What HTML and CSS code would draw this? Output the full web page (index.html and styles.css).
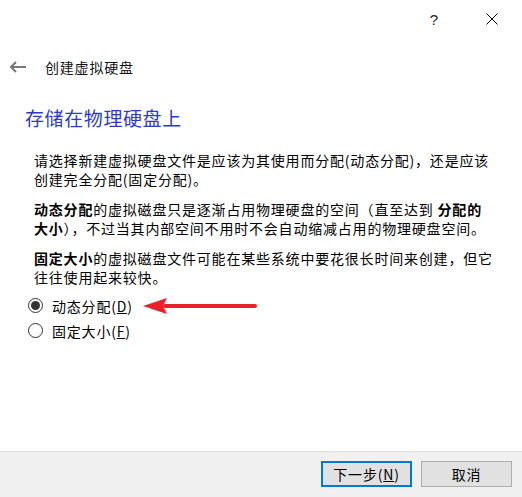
FILE: index.html
```html
<!DOCTYPE html>
<html>
<head>
<meta charset="utf-8">
<title>创建虚拟硬盘</title>
<link rel="stylesheet" href="styles.css">
</head>
<body>
<div class="titlebar">
	<span class="tb_btn tb_help">?</span>
	<span class="tb_btn tb_close">
		<svg width="12" height="12" viewBox="0 0 12 12"><path d="M0.5 0.5L11.5 11.5M11.5 0.5L0.5 11.5" stroke="#000" stroke-width="1" fill="none"/></svg>
	</span>
</div>

<div class="nav">
	<svg class="nav_back" width="16" height="12" viewBox="0 0 16 12"><path d="M1 6H16M6 1L1 6L6 11" stroke="#777" stroke-width="2" fill="none"/></svg>
	<span class="nav_title">创建虚拟硬盘</span>
</div>

<div class="main">
	<h1 class="page_title">存储在物理硬盘上</h1>
	<div class="content">
		<p>请选择新建虚拟硬盘文件是应该为其使用而分配(动态分配)，还是应该<br>创建完全分配(固定分配)。</p>
		<p><b>动态分配</b>的虚拟磁盘只是逐渐占用物理硬盘的空间（直至达到 <b>分配的<br>大小</b>），不过当其内部空间不用时不会自动缩减占用的物理硬盘空间。</p>
		<p class="last"><b>固定大小</b>的虚拟磁盘文件可能在某些系统中要花很长时间来创建，但它<br>往往使用起来较快。</p>
		<div class="radios">
			<label class="radio_row">
				<input type="radio" name="alloc" checked>
				<span>动态分配(<u>D</u>)</span>
				<svg class="hint_arrow" width="114" height="18" viewBox="0 0 114 18"><path d="M22 9H112" stroke="#e8212b" stroke-width="4" stroke-linecap="round"/><path d="M0 9L24 1L20 9L24 17Z" fill="#e8212b"/></svg>
			</label>
			<label class="radio_row">
				<input type="radio" name="alloc">
				<span>固定大小(<u>F</u>)</span>
			</label>
		</div>
	</div>
</div>

<div class="footer">
	<button class="btn btn_default">下一步(<u>N</u>)</button>
	<button class="btn">取消</button>
</div>
</body>
</html>
```

FILE: styles.css
```css
html,body{margin: 0;padding: 0;}
body{width: 522px;height: 497px;display: flex;flex-direction: column;background: #fff;color: #000;font-family: "Noto Sans CJK SC", "Liberation Sans", sans-serif;font-size: 14px;overflow: hidden;}

.titlebar{height: 38px;display: flex;justify-content: flex-end;padding-right: 7px;}
.tb_btn{width: 46px;display: flex;align-items: center;justify-content: center;}
.tb_help{margin-right: 12px;font-family: "Liberation Sans", sans-serif;font-size: 15px;color: #222;}

.nav{height: 30px;margin-top: 14px;display: flex;align-items: center;}
.nav_back{margin-left: 10px;}
.nav_title{margin-left: 19px;font-size: 14px;letter-spacing: 0.8px;color: #111;}

.main{flex: 1;}
.page_title{margin: 24px 0 0 25px;font-size: 19px;line-height: 24px;font-weight: normal;color: #2b3bc8;letter-spacing: 0.6px;}
.content{padding-left: 34px;margin-top: 21px;}
.content p{margin: 0 0 11px;line-height: 19px;letter-spacing: 0.8px;}
.content p.last{margin-bottom: 0;}
.content b{font-weight: bold;}

.radios{margin-top: 6px;margin-left: -6px;}
.radio_row{height: 25px;display: flex;align-items: center;letter-spacing: 0.8px;}
.radio_row input{appearance: none;-webkit-appearance: none;flex: 0 0 15px;margin: 0 9px 0 0;width: 15px;height: 15px;border: 1px solid #333;border-radius: 50%;box-sizing: border-box;display: flex;align-items: center;justify-content: center;}
.radio_row input:checked::after{content: "";width: 9px;height: 9px;border-radius: 50%;background: #333;}
.hint_arrow{margin-left: 10px;}

.footer{height: 46px;border-top: 1px solid #dfdfdf;background: #f0f0f0;display: flex;justify-content: flex-end;align-items: flex-start;padding: 9px 10px 0 0;box-sizing: border-box;gap: 9px;}
.btn{width: 91px;height: 26px;margin: 0;padding: 0;background: #e1e1e1;border: 1px solid #adadad;font-family: inherit;font-size: 14px;letter-spacing: 0.8px;color: #000;}
.btn_default{border: 2px solid #0078d7;}
```
